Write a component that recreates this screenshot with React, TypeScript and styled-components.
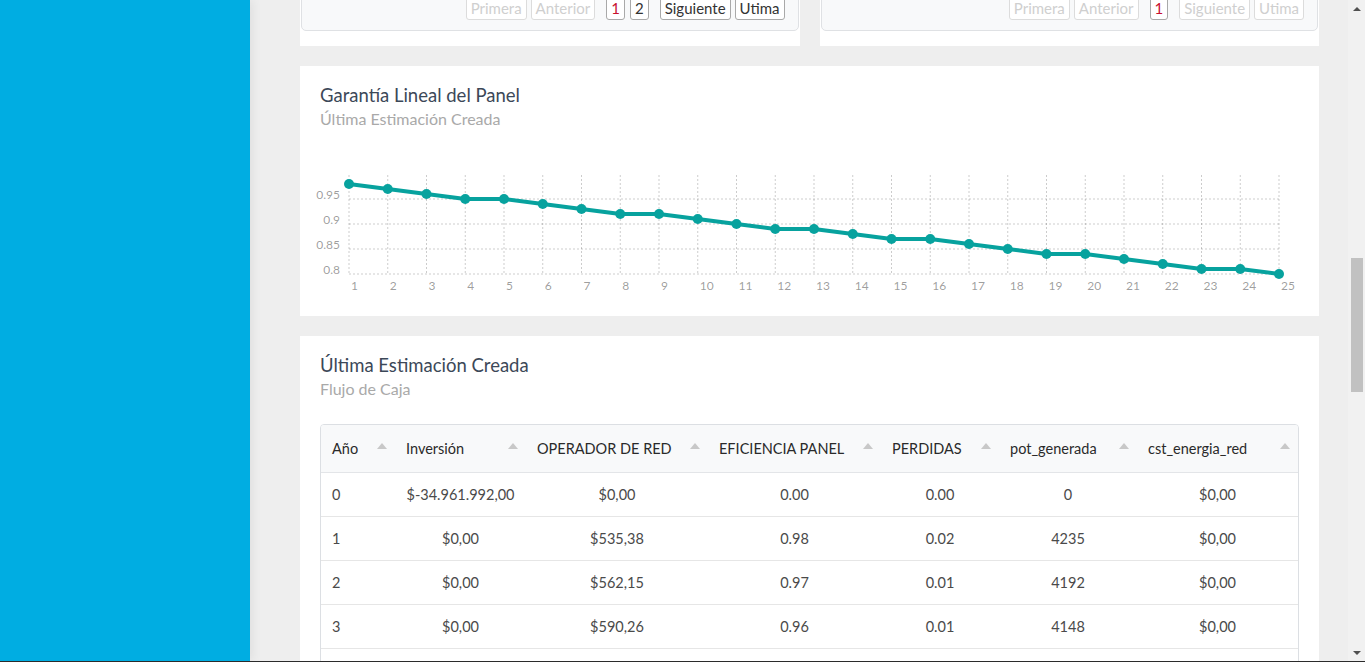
import React from 'react';
import styled, { createGlobalStyle } from 'styled-components';

const GlobalStyle = createGlobalStyle`
  html, body { margin: 0; padding: 0; overflow: hidden; }
  body { font-family: Lato, "Open Sans", "DejaVu Sans", sans-serif; }
  *, *::before, *::after { box-sizing: border-box; }
`;

const Frame = styled.div`
  display: flex;
  width: 1365px;
  height: 662px;
  overflow: hidden;
  background: #eeeeee;
  border-bottom: 1px solid #2b2b2b;
`;

const Sidebar = styled.aside`
  width: 250px;
  flex: none;
  background: #00ade2;
  box-shadow: 2px 0 10px rgba(0, 0, 0, 0.07);
  position: relative;
  z-index: 1;
`;

const Main = styled.main`
  flex: 1;
  min-width: 0;
  overflow: hidden;
  padding: 0 29px 0 50px;
`;

const Content = styled.div`
  margin-top: -12px;
  display: flex;
  flex-direction: column;
  gap: 20px;
`;

const TopRow = styled.div`
  display: grid;
  grid-template-columns: 1fr 1fr;
  gap: 20px;
`;

const Card = styled.section`
  background: #ffffff;
  padding: 18px 20px 20px;
`;

const PagerCard = styled.section`
  background: #ffffff;
  padding: 0 1px 15px;
`;

const Pager = styled.div`
  display: flex;
  justify-content: flex-end;
  align-items: center;
  padding: 7px 13px 10px;
  background: #f8f9fa;
  border: 1px solid #dfe1e4;
  border-radius: 0 0 5px 5px;
`;

const PagerGroup = styled.div<{ $spaced?: boolean }>`
  display: flex;
  gap: ${(p) => (p.$spaced ? '5px' : '4px')};
  margin: ${(p) => (p.$spaced ? '0 11px' : '0')};
`;

const PageButton = styled.button<{ $disabled?: boolean; $active?: boolean }>`
  font-family: inherit;
  font-size: 15px;
  line-height: 20px;
  height: 24px;
  padding: 1px 4px;
  background: #ffffff;
  border: 1px solid ${(p) => (p.$disabled ? '#dcdcdc' : '#a9a9a9')};
  border-radius: 3px;
  color: ${(p) => (p.$active ? '#c8102e' : p.$disabled ? '#cfcfcf' : '#333333')};
  cursor: ${(p) => (p.$disabled ? 'default' : 'pointer')};
`;

const Title = styled.h4`
  margin: 0;
  font-size: 18.5px;
  line-height: 22px;
  font-weight: 400;
  color: #3c4858;
`;

const Subtitle = styled.p`
  margin: 3px 0 0;
  font-size: 16px;
  line-height: 20px;
  font-weight: 400;
  color: #a9a9a9;
`;

const ChartSvg = styled.svg`
  display: block;
  margin-top: 31px;
  width: 979px;
  height: 136px;
  overflow: visible;
  font-family: Lato, "Open Sans", sans-serif;
`;

const TableWrap = styled.div`
  margin-top: 25px;
  border: 1px solid #dcdfe3;
  border-radius: 4px 4px 0 0;
  overflow: hidden;
`;

const Table = styled.table`
  width: 100%;
  border-collapse: collapse;
  table-layout: fixed;
  font-size: 14.5px;
`;

const Th = styled.th`
  height: 47px;
  padding: 0 8px 0 11px;
  background: #f8f9fa;
  border-bottom: 1px solid #e3e5e8;
  text-align: left;
  font-weight: 400;
  color: #2a2a2a;
  font-size: 14.5px;
  white-space: nowrap;
`;

const ThInner = styled.div`
  display: flex;
  align-items: center;
  justify-content: space-between;
`;

const SortArrow = styled.span`
  width: 0;
  height: 0;
  border-left: 5.5px solid transparent;
  border-right: 5.5px solid transparent;
  border-bottom: 6px solid #c8c8c8;
  margin-top: -5px;
  flex: none;
`;

const Td = styled.td<{ $left?: boolean }>`
  height: 44px;
  padding: 0 11px;
  border-bottom: 1px solid #e6e6e6;
  text-align: ${(p) => (p.$left ? 'left' : 'center')};
  color: #4a4a4a;
  font-weight: 400;
`;

const ScrollBar = styled.div`
  width: 17px;
  flex: none;
  background: #f1f1f1;
  display: flex;
  flex-direction: column;
`;

const ScrollArrow = styled.div<{ $down?: boolean }>`
  height: 17px;
  flex: none;
  display: flex;
  align-items: center;
  justify-content: center;
  &::before {
    content: '';
    width: 0;
    height: 0;
    border-left: 4px solid transparent;
    border-right: 4px solid transparent;
    ${(p) => (p.$down ? 'border-top: 4px solid #505050;' : 'border-bottom: 4px solid #505050;')}
  }
`;

const ScrollTrack = styled.div`
  flex: 1;
  padding: 241px 2px 0 3px;
`;

const ScrollThumb = styled.div`
  height: 134px;
  background: #c1c1c1;
`;

const values = [
  0.98, 0.97, 0.96, 0.95, 0.95, 0.94, 0.93, 0.92, 0.92, 0.91, 0.9, 0.89, 0.89,
  0.88, 0.87, 0.87, 0.86, 0.85, 0.84, 0.84, 0.83, 0.82, 0.81, 0.81, 0.8,
];

const X0 = 29;
const STEP = 38.75;
const yOf = (v: number) => 114 - (v - 0.8) * 500;

function Chart() {
  const xs = values.map((_, i) => X0 + i * STEP);
  const path = values.map((v, i) => `${i === 0 ? 'M' : 'L'}${xs[i]},${yOf(v)}`).join(' ');
  const yTicks = [
    { v: 0.95, l: '0.95' },
    { v: 0.9, l: '0.9' },
    { v: 0.85, l: '0.85' },
    { v: 0.8, l: '0.8' },
  ];
  return (
    <ChartSvg viewBox="0 0 979 136">
      <g stroke="rgba(0,0,0,0.2)" strokeWidth={1} strokeDasharray="2 2" fill="none">
        {xs.map((x, i) => (
          <line key={`v${i}`} x1={x} x2={x} y1={15} y2={114} />
        ))}
        {yTicks.map((t) => (
          <line key={`h${t.l}`} x1={X0} x2={X0 + 24 * STEP} y1={yOf(t.v)} y2={yOf(t.v)} />
        ))}
      </g>
      <g fill="rgba(0,0,0,0.4)" fontSize={12}>
        {yTicks.map((t) => (
          <text key={`yl${t.l}`} x={20} y={yOf(t.v) - 0.5} textAnchor="end">
            {t.l}
          </text>
        ))}
        {xs.map((x, i) => (
          <text key={`xl${i}`} x={x + 2} y={129.5}>
            {i + 1}
          </text>
        ))}
      </g>
      <path d={path} fill="none" stroke="#07a29e" strokeWidth={4} strokeLinejoin="round" />
      <g fill="#07a29e">
        {values.map((v, i) => (
          <circle key={`p${i}`} cx={xs[i]} cy={yOf(v)} r={5} />
        ))}
      </g>
    </ChartSvg>
  );
}

const columns = [
  { label: 'Año', w: 74 },
  { label: 'Inversión', w: 131 },
  { label: 'OPERADOR DE RED', w: 182 },
  { label: 'EFICIENCIA PANEL', w: 173 },
  { label: 'PERDIDAS', w: 118 },
  { label: 'pot_generada', w: 138 },
  { label: 'cst_energia_red', w: 161 },
];

const rows = [
  ['0', '$-34.961.992,00', '$0,00', '0.00', '0.00', '0', '$0,00'],
  ['1', '$0,00', '$535,38', '0.98', '0.02', '4235', '$0,00'],
  ['2', '$0,00', '$562,15', '0.97', '0.01', '4192', '$0,00'],
  ['3', '$0,00', '$590,26', '0.96', '0.01', '4148', '$0,00'],
  ['4', '$0,00', '$619,77', '0.95', '0.01', '4105', '$0,00'],
];

function PagerFooter({ pages, hasNext }: { pages: number; hasNext: boolean }) {
  return (
    <PagerCard>
      <Pager>
        <PagerGroup>
          <PageButton $disabled>Primera</PageButton>
          <PageButton $disabled>Anterior</PageButton>
        </PagerGroup>
        <PagerGroup $spaced>
          {Array.from({ length: pages }, (_, i) => (
            <PageButton key={i} $active={i === 0}>
              {i + 1}
            </PageButton>
          ))}
        </PagerGroup>
        <PagerGroup>
          <PageButton $disabled={!hasNext}>Siguiente</PageButton>
          <PageButton $disabled={!hasNext}>Utima</PageButton>
        </PagerGroup>
      </Pager>
    </PagerCard>
  );
}

export default function App() {
  return (
    <>
      <GlobalStyle />
      <Frame>
        <Sidebar />
        <Main>
          <Content>
            <TopRow>
              <PagerFooter pages={2} hasNext />
              <PagerFooter pages={1} hasNext={false} />
            </TopRow>
            <Card>
              <Title>Garantía Lineal del Panel</Title>
              <Subtitle>Última Estimación Creada</Subtitle>
              <Chart />
            </Card>
            <Card>
              <Title>Última Estimación Creada</Title>
              <Subtitle>Flujo de Caja</Subtitle>
              <TableWrap>
                <Table>
                  <colgroup>
                    {columns.map((c) => (
                      <col key={c.label} style={{ width: c.w }} />
                    ))}
                  </colgroup>
                  <thead>
                    <tr>
                      {columns.map((c) => (
                        <Th key={c.label}>
                          <ThInner>
                            <span>{c.label}</span>
                            <SortArrow />
                          </ThInner>
                        </Th>
                      ))}
                    </tr>
                  </thead>
                  <tbody>
                    {rows.map((r) => (
                      <tr key={r[0]}>
                        {r.map((cell, ci) => (
                          <Td key={ci} $left={ci === 0}>
                            {cell}
                          </Td>
                        ))}
                      </tr>
                    ))}
                  </tbody>
                </Table>
              </TableWrap>
            </Card>
          </Content>
        </Main>
        <ScrollBar>
          <ScrollArrow />
          <ScrollTrack>
            <ScrollThumb />
          </ScrollTrack>
          <ScrollArrow $down />
        </ScrollBar>
      </Frame>
    </>
  );
}
